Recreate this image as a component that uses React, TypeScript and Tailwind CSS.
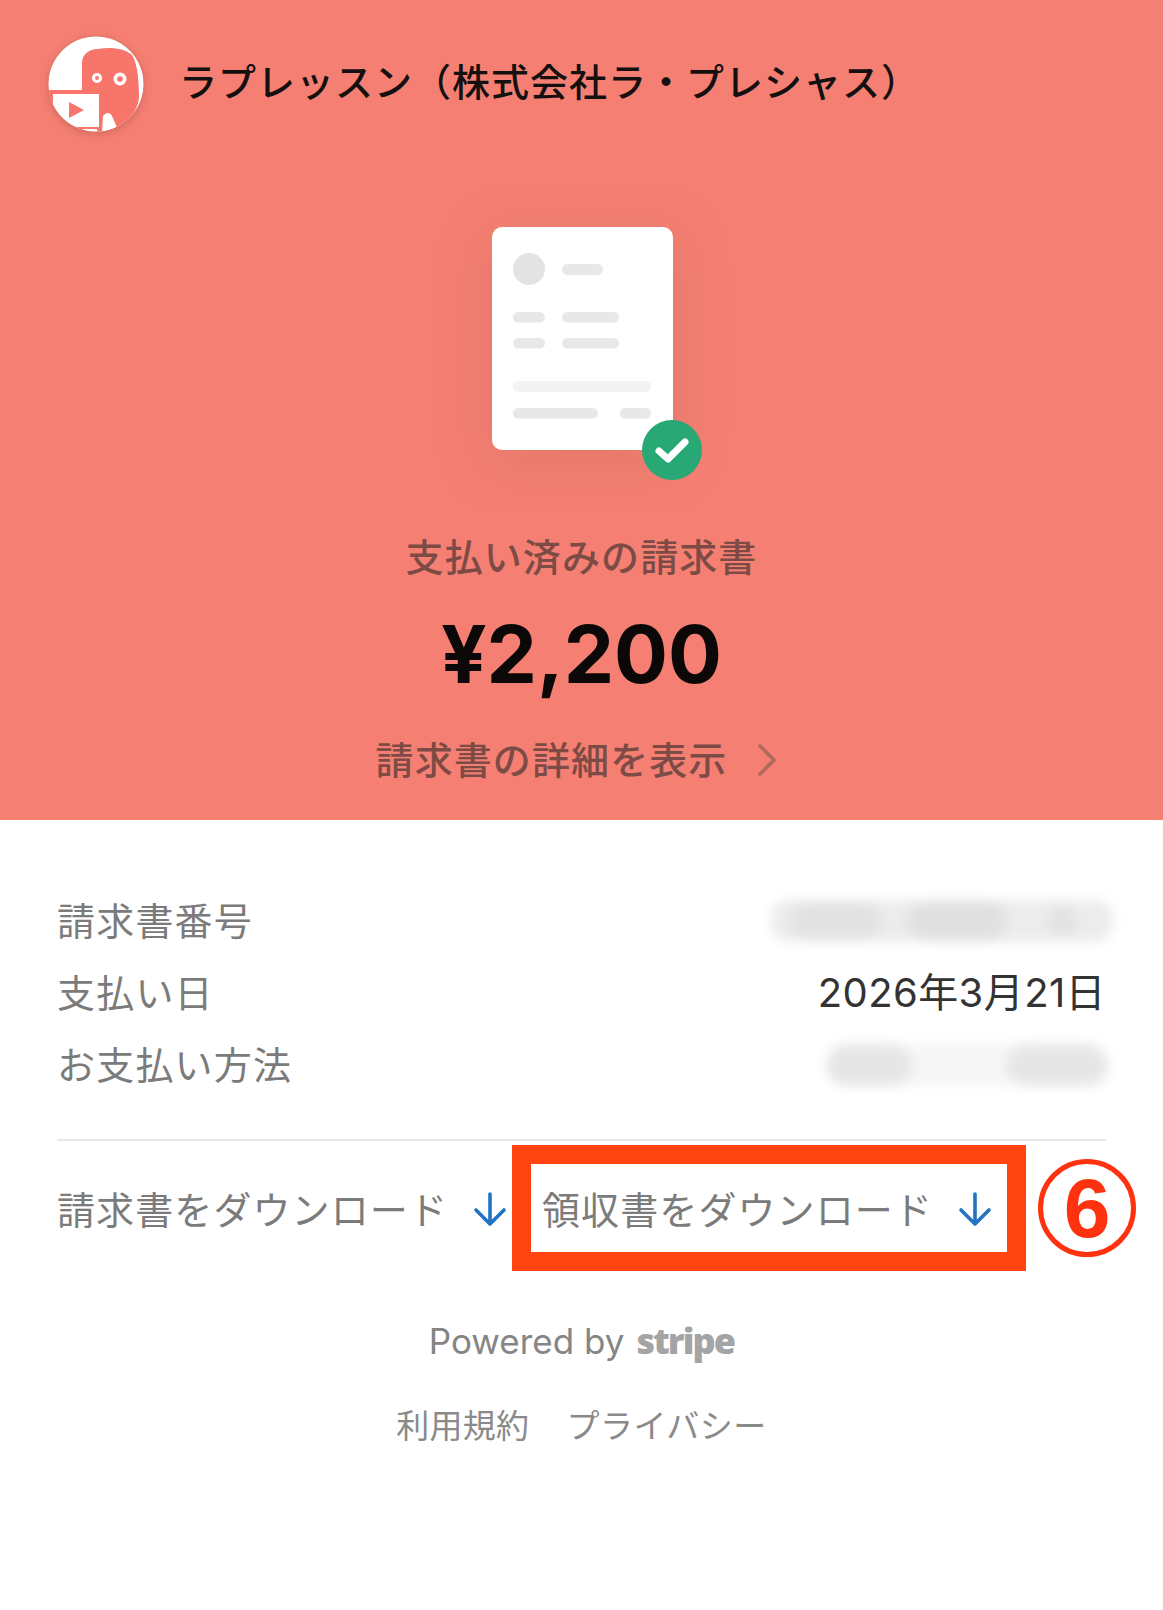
import React from "react";

const font = { fontFamily: '"Noto Sans CJK JP", "Noto Sans", sans-serif' };

function Logo() {
  return (
    <svg width="96" height="96" viewBox="0 0 96 96" className="block shrink-0 rounded-full drop-shadow-[0_2px_4px_rgba(120,50,40,0.3)]">
      <defs>
        <clipPath id="lc"><circle cx="48" cy="48" r="47.5" /></clipPath>
        <filter id="soft"><feGaussianBlur stdDeviation="0.5" /></filter>
      </defs>
      <g clipPath="url(#lc)">
        <rect width="96" height="96" fill="#fff" />
        <g filter="url(#soft)">
          <path d="M34 26 C35 17 42 13 50 13 C62 11 76 12 84 19 C90 28 91 48 91 62 C90 72 82 86 70 94 L50 96 L34 60 Z" fill="#f7746a" />
          <circle cx="49" cy="42" r="5" fill="#fff" />
          <circle cx="49" cy="42" r="2" fill="#f7746a" />
          <circle cx="72" cy="43" r="6.5" fill="#fff" />
          <circle cx="72" cy="43" r="2.8" fill="#f7746a" />
          <rect x="0" y="54" width="53" height="39" fill="#f7746a" />
          <rect x="5" y="58" width="46" height="33" fill="#fff" />
          <path d="M21 66 L36 74 L21 82 Z" fill="#f7746a" />
          <path d="M54 96 L55 80 C58 76 62 76 64 80 L70 94 Z" fill="#fff" />
        </g>
      </g>
    </svg>
  );
}

function Illustration() {
  return (
    <svg width="360" height="320" viewBox="400 190 360 320" className="block">
      <defs>
        <filter id="sh" x="-80%" y="-80%" width="260%" height="260%">
          <feDropShadow dx="0" dy="12" stdDeviation="28" floodColor="#8a4a40" floodOpacity="0.17" />
        </filter>
      </defs>
      <rect x="492" y="227" width="181" height="223" rx="10" fill="#fff" filter="url(#sh)" />
      <circle cx="529" cy="269" r="16" fill="#e3e3e3" />
      <rect x="562" y="264" width="41" height="11" rx="5.5" fill="#e8e8e8" />
      <rect x="513" y="312" width="32" height="10.5" rx="5.2" fill="#e8e8e8" />
      <rect x="562" y="312" width="57" height="10.5" rx="5.2" fill="#e8e8e8" />
      <rect x="513" y="338" width="32" height="10.5" rx="5.2" fill="#e8e8e8" />
      <rect x="562" y="338" width="57" height="10.5" rx="5.2" fill="#e8e8e8" />
      <rect x="513" y="381" width="138" height="11" rx="5.5" fill="#f3f3f3" />
      <rect x="513" y="408" width="85" height="10.5" rx="5.2" fill="#e8e8e8" />
      <rect x="620" y="408" width="31" height="10.5" rx="5.2" fill="#e8e8e8" />
      <circle cx="672" cy="450" r="30" fill="#28a874" />
      <path d="M659 451 L668 459 L685 442" fill="none" stroke="#fff" strokeWidth="7" strokeLinecap="round" strokeLinejoin="round" />
    </svg>
  );
}

function DownArrow() {
  return (
    <svg width="34" height="36" viewBox="0 0 34 36" fill="none" stroke="#2273c3" strokeWidth="3.6" strokeLinecap="round" strokeLinejoin="round" className="block shrink-0">
      <path d="M17 3 V33 M3 19 L17 33 L31 19" />
    </svg>
  );
}

function Row({ label, children }: { label: string; children: React.ReactNode }) {
  return (
    <div className="flex h-[72px] items-center justify-between">
      <span className="relative top-[-2px] text-[38px] leading-none text-[#7b7b7b] tracking-[1.2px]">{label}</span>
      {children}
    </div>
  );
}

export default function App() {
  return (
    <div className="relative h-[1610px] w-[1163px] overflow-hidden bg-white" style={font}>
      <section className="flex h-[820px] flex-col bg-[#f47f72]">
        <div className="flex items-center pl-12 pt-9">
          <Logo />
          <h1 className="ml-[35px] mt-[-8px] whitespace-nowrap text-[38px] font-medium leading-none text-[#141010] tracking-[1px]">
            ラプレッスン（株式会社ラ・プレシャス）
          </h1>
        </div>
        <div className="mt-[58px] flex justify-center pr-[3px]">
          <Illustration />
        </div>
        <p className="mt-[15px] text-center text-[38px] font-medium leading-[60px] text-[#7d4b45] tracking-[1.1px]">
          支払い済みの請求書
        </p>
        <p className="mt-6 text-center text-[80px] font-bold leading-[90px] text-[#0c0808]" style={{ fontFamily: 'Inter, "Noto Sans", sans-serif' }}>
          ¥2,200
        </p>
        <div className="mt-[29px] flex h-[60px] items-center justify-center gap-[30px] pr-[10px]">
          <span className="text-[38px] font-medium leading-none text-[#7d4b45] tracking-[1.1px]">請求書の詳細を表示</span>
          <svg width="20" height="34" viewBox="0 0 20 34" fill="none" stroke="#b0685f" strokeWidth="3.6" strokeLinecap="round" strokeLinejoin="round" className="mt-[4px] block">
            <path d="M3 3 L17 17 L3 31" />
          </svg>
        </div>
      </section>

      <section className="px-[57px] pt-[65px]">
        <Row label="請求書番号">
          <div className="relative mr-[-7px] flex h-[42px] w-[342px] items-center rounded-[18px] bg-[#ececec] blur-[6px]">
            <div className="ml-[20px] h-[36px] w-[90px] rounded-full bg-[#e2e2e2]" />
            <div className="ml-[26px] h-[38px] w-[100px] rounded-full bg-[#e0e0e0]" />
            <div className="ml-[40px] h-[30px] w-[30px] rounded-full bg-[#e3e3e3]" />
          </div>
        </Row>
        <Row label="支払い日">
          <span className="text-[40px] leading-none text-[#333] tracking-[0.4px]" style={{ fontFamily: 'Inter, "Noto Sans CJK JP", sans-serif' }}>
            2026年3月21日
          </span>
        </Row>
        <Row label="お支払い方法">
          <div className="mr-[-2px] flex h-[42px] w-[282px] items-center justify-between rounded-full bg-[#f6f6f6] blur-[6px]">
            <div className="h-full w-[86px] rounded-full bg-[#e6e6e6]" />
            <div className="h-full w-[102px] rounded-full bg-[#e6e6e6]" />
          </div>
        </Row>
        <div className="mt-[38px] h-[2px] bg-[#e8e8e8]" />
        <div className="mt-[32px] flex h-[70px] items-center">
          <div className="flex w-[485px] items-center">
            <span className="whitespace-nowrap text-[38px] leading-none text-[#7b7b7b] tracking-[1.1px]">請求書をダウンロード</span>
            <span className="ml-[25px] mt-[2px]"><DownArrow /></span>
          </div>
          <div className="flex items-center">
            <span className="whitespace-nowrap text-[38px] leading-none text-[#7b7b7b] tracking-[1.1px]">領収書をダウンロード</span>
            <span className="ml-[25px] mt-[2px]"><DownArrow /></span>
          </div>
        </div>
        <div className="mt-[73px] flex h-[50px] items-center justify-center gap-[12px]">
          <span className="text-[35px] leading-none text-[#858585]" style={{ fontFamily: 'Inter, sans-serif' }}>Powered by</span>
          <span className="text-[36px] font-black leading-none tracking-[-1.9px] text-[#a4a4a4]" style={{ fontFamily: '"Open Sans", sans-serif' }}>stripe</span>
        </div>
        <div className="mt-[33px] flex h-[50px] items-center justify-center gap-[37px]">
          <span className="text-[33px] leading-none text-[#8a8a8a] tracking-[0.3px]">利用規約</span>
          <span className="text-[33px] leading-none text-[#8a8a8a] tracking-[0.5px]">プライバシー</span>
        </div>
      </section>

      <div className="absolute left-[512px] top-[1145px] h-[126px] w-[514px] border-[19px] border-[#ff4410]" />
      <div className="absolute left-[1038px] top-[1159px] flex h-[98px] w-[98px] items-center justify-center rounded-full border-[5px] border-[#ff3210] text-[84px] font-bold leading-none text-[#ff3210]" style={{ fontFamily: '"Liberation Sans", sans-serif' }}>
        6
      </div>
    </div>
  );
}
